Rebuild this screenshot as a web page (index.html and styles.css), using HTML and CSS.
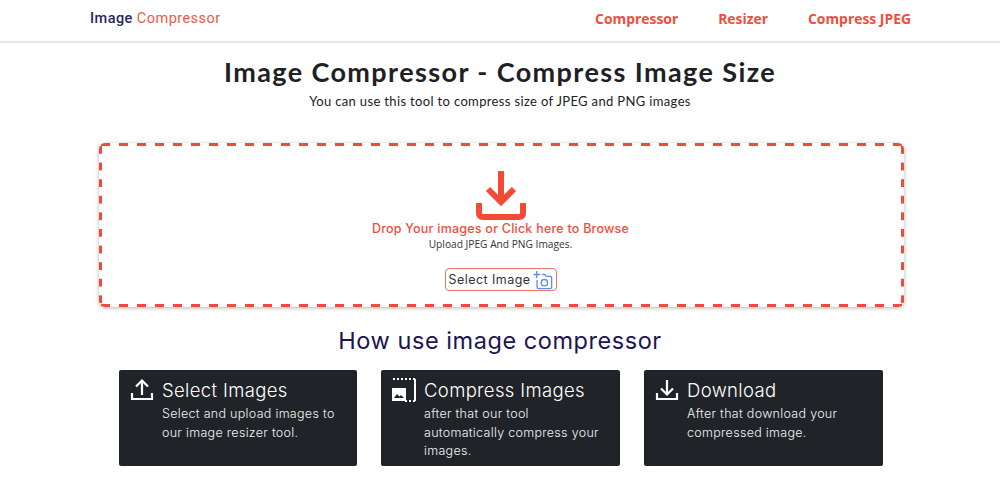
FILE: index.html
```html
<!DOCTYPE html>
<html lang="en">
<head>
    <meta charset="UTF-8">
    <meta name="viewport" content="width=device-width, initial-scale=1.0">
    <title>Image Compressor</title>
    <link rel="stylesheet" href="styles.css">
</head>
<body>
    <nav class="navbar">
        <a class="brand">Image <span>Compressor</span></a>
        <div class="nav-links">
            <a>Compressor</a>
            <a>Resizer</a>
            <a>Compress JPEG</a>
        </div>
    </nav>

    <header class="page-head">
        <h1>Image Compressor - Compress Image Size</h1>
        <p>You can use this tool to compress size of JPEG and PNG images</p>
    </header>

    <section class="drop-area">
        <svg class="drop-icon" viewBox="0 0 50 50" width="50" height="50">
            <path d="M25 0V30M12 18L25 31L38 18" fill="none" stroke="#f44b36" stroke-width="6"/>
            <path d="M3 32V42Q3 46 7 46H43Q47 46 47 42V32" fill="none" stroke="#f44b36" stroke-width="6"/>
        </svg>
        <div class="drop-title">Drop Your images or Click here to Browse</div>
        <div class="drop-sub">Upload JPEG And PNG Images.</div>
        <button class="select-btn">Select Image
            <svg viewBox="0 0 22 22" width="20" height="20">
                <path d="M4 1V9M0.5 5H8M10 5H13L14.5 7H19Q20.500 7 20.500 8.500V19Q20.500 20.500 19 20.500H6Q4.500 20.500 4.500 19V11" fill="none" stroke="#5f8fe8" stroke-width="1.500"/>
                <circle cx="12.500" cy="14" r="3.500" fill="none" stroke="#5f8fe8" stroke-width="1.500"/>
            </svg>
        </button>
    </section>

    <h2 class="how-title">How use image compressor</h2>

    <section class="cards">
        <div class="card">
            <div class="card-head">
                <svg viewBox="0 0 24 24" width="24" height="24">
                    <path d="M12 17V3M6 8.500L12 2.500L18 8.500M2 15V21H22V15" fill="none" stroke="#fff" stroke-width="2.200"/>
                </svg>
                <h3>Select Images</h3>
            </div>
            <p>Select and upload images to our image resizer tool.</p>
        </div>
        <div class="card">
            <div class="card-head">
                <svg viewBox="0 0 24 24" width="24" height="24">
                    <path d="M1 1H23V23H12M23 1V23" fill="none" stroke="#fff" stroke-width="2" stroke-dasharray="2 2"/>
                    <path d="M0 10H14V23H0Z" fill="#fff"/>
                    <path d="M2 20L5 16L7.500 18.500L9 17L12 20Z" fill="#202428"/>
                </svg>
                <h3>Compress Images</h3>
            </div>
            <p>after that our tool automatically compress your images.</p>
        </div>
        <div class="card">
            <div class="card-head">
                <svg viewBox="0 0 24 24" width="24" height="24">
                    <path d="M12 2V16M6 10.500L12 16.500L18 10.500M2 15V21H22V15" fill="none" stroke="#fff" stroke-width="2.200"/>
                </svg>
                <h3>Download</h3>
            </div>
            <p>After that download your compressed image.</p>
        </div>
    </section>
</body>
</html>
```

FILE: styles.css
```css
body {
    margin: 0;
    font-family: "Inter", "Liberation Sans", sans-serif;
    background: #fff;
    color: #1f2327;
}

.navbar {
    display: flex;
    justify-content: space-between;
    align-items: center;
    box-sizing: border-box;
    height: 43px;
    padding: 0 89px 4px 90px;
    border-bottom: 2px solid #e6e6e6;
}

.brand {
    font-family: "Roboto", sans-serif;
    font-size: 14.500px;
    font-weight: 500;
    letter-spacing: 0.45px;
    color: #2b2460;
}

.brand span {
    font-weight: 400;
    color: #ee5a4a;
}

.nav-links {
    display: flex;
    gap: 40px;
}

.nav-links a {
    font-family: "Open Sans", sans-serif;
    font-size: 13.900px;
    font-weight: 700;
    color: #f04e3c;
}

.page-head {
    text-align: center;
    padding-top: 14px;
}

.page-head h1 {
    margin: 0;
    font-family: "Lato", sans-serif;
    font-size: 27px;
    line-height: 30px;
    font-weight: 700;
    letter-spacing: 1.4px;
    color: #1d2125;
}

.page-head p {
    margin: 5px 0 0;
    font-family: "Lato", sans-serif;
    font-size: 13px;
    line-height: 18px;
    letter-spacing: 0.35px;
    color: #1d2125;
}

.drop-area {
    --dash-h: linear-gradient(to right, #f04a38 9px, transparent 9px);
    --dash-v: linear-gradient(to bottom, #f04a38 7.500px, transparent 7.500px);
    display: flex;
    flex-direction: column;
    align-items: center;
    box-sizing: border-box;
    width: 805px;
    height: 164px;
    margin: 33px 0 0 99px;
    padding: 28px 2px 0 0;
    background:
        var(--dash-h) 2px 0 / 18px 3px repeat-x,
        var(--dash-h) 2px 100% / 18px 3px repeat-x,
        var(--dash-v) 0 3px / 3px 16.600px repeat-y,
        var(--dash-v) 100% 3px / 3px 16.600px repeat-y;
    border-radius: 6px;
    box-shadow: 0 1px 4px rgba(0, 0, 0, 0.3);
}

.drop-icon {
    display: block;
}

.drop-title {
    margin-top: 0;
    font-size: 12.500px;
    line-height: 16px;
    font-weight: 500;
    letter-spacing: 0.23px;
    color: #f04e3c;
}

.drop-sub {
    margin-top: -1px;
    font-family: "Open Sans", sans-serif;
    font-size: 10.200px;
    line-height: 16px;
    color: #333;
}

.select-btn {
    display: flex;
    align-items: center;
    gap: 2px;
    box-sizing: border-box;
    height: 23px;
    margin-top: 16px;
    padding: 0 0 0 3px;
    width: 112px;
    background: #fff;
    border: 1px solid #e8766a;
    border-radius: 4px;
    font-family: "Inter", sans-serif;
    font-size: 12.500px;
    letter-spacing: 0.45px;
    color: #333;
}

.how-title {
    margin: 19px 0 0;
    text-align: center;
    font-size: 23.500px;
    line-height: 30px;
    font-weight: 400;
    letter-spacing: 0.55px;
    color: #1c1456;
}

.cards {
    display: grid;
    grid-template-columns: 238px 239px 239px;
    gap: 24px;
    margin: 14px 0 0 119px;
}

.card {
    box-sizing: border-box;
    height: 96px;
    padding: 7px 14px 0 11px;
    background: #202428;
    border-radius: 2px;
    color: #fff;
}

.card-head {
    display: flex;
    align-items: center;
    gap: 8px;
}

.card-head svg {
    flex: none;
}

.card-head h3 {
    margin: 0;
    font-size: 18.500px;
    line-height: 26px;
    font-weight: 300;
    letter-spacing: 0.35px;
}

.card p {
    margin: 2px 0 0 32px;
    font-size: 12.500px;
    line-height: 18.500px;
    font-weight: 300;
    letter-spacing: 0.3px;
    color: #f2f2f2;
}
```
